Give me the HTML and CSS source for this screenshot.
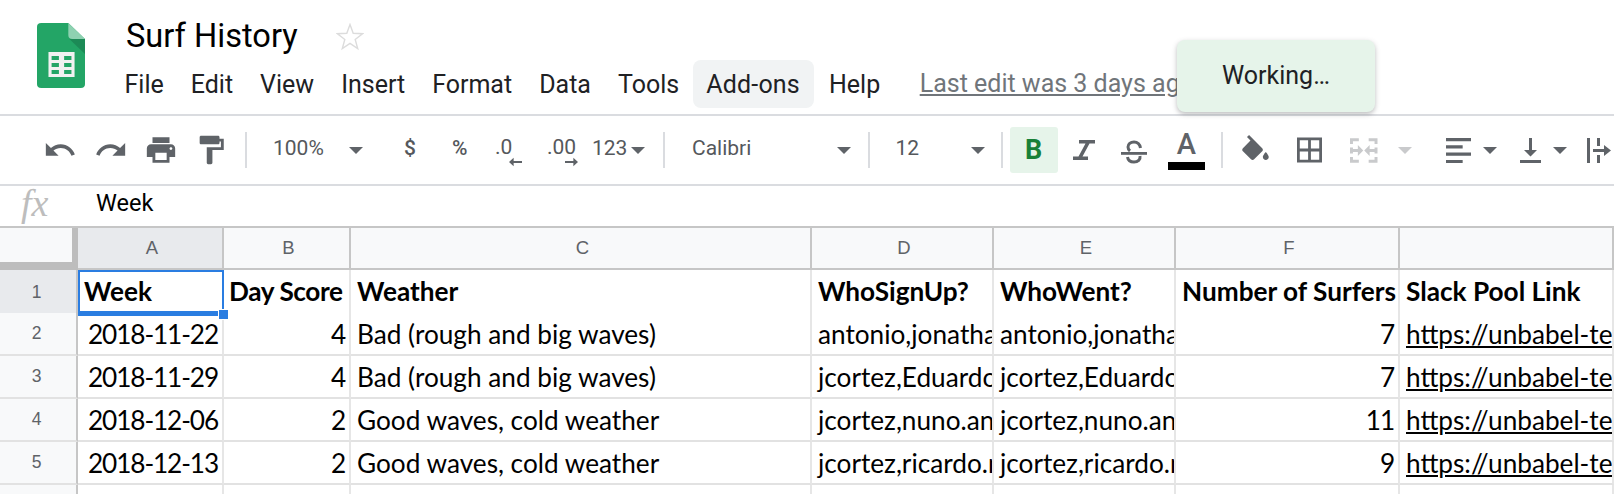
FILE: index.html
```html
<!DOCTYPE html>
<html lang="en">
<head>
<meta charset="utf-8">
<title>Surf History</title>
<link rel="stylesheet" href="styles.css">
</head>
<body>
<div class="app">
  <header class="header">
    <svg class="logo" viewBox="0 0 46 65" width="48" height="65" preserveAspectRatio="none">
      <path d="M4 0H30L46 16V61a4 4 0 0 1-4 4H4a4 4 0 0 1-4-4V4a4 4 0 0 1 4-4z" fill="#23a566"/>
      <path d="M30 0L46 16H34a4 4 0 0 1-4-4z" fill="#8ed1b1"/>
      <path d="M31 16L46 31V16z" fill="#1c8a56"/>
      <path d="M11 29H36V54H11z" fill="#f1f1f1"/>
      <path d="M14 33H21V37H14zM26 33H33V37H26zM14 40H21V44H14zM26 40H33V44H26zM14 47H21V51H14zM26 47H33V51H26z" fill="#23a566"/>
    </svg>
    <div class="heading">
      <div class="title-row">
        <span class="title">Surf History</span>
        <svg class="star" viewBox="0 0 28 28" width="28" height="28"><path d="M14 1.500l3.200 8.800 9.300.4-7.300 5.800 2.500 9-7.700-5.200-7.700 5.200 2.500-9-7.300-5.800 9.300-.4z" fill="none" stroke="#dcdcdc" stroke-width="1.400"/></svg>
      </div>
      <nav class="menu">
        <span class="menu-item">File</span>
        <span class="menu-item">Edit</span>
        <span class="menu-item">View</span>
        <span class="menu-item">Insert</span>
        <span class="menu-item">Format</span>
        <span class="menu-item">Data</span>
        <span class="menu-item">Tools</span>
        <span class="menu-item menu-active">Add-ons</span>
        <span class="menu-item">Help</span>
        <span class="last-edit">Last edit was 3 days ago</span>
      </nav>
    </div>
    <div class="toast">Working…</div>
  </header>

  <div class="toolbar">
    <span class="tb-icon"><svg viewBox="0 0 24 24"><path d="M12.500 8c-2.650 0-5.050.99-6.900 2.600L2 7v9h9l-3.620-3.620c1.390-1.160 3.160-1.880 5.120-1.880 3.540 0 6.550 2.310 7.600 5.500l2.370-.78C21.080 11.030 17.150 8 12.500 8z"/></svg></span>
    <span class="tb-icon"><svg viewBox="0 0 24 24"><path d="M18.400 10.600C16.550 8.990 14.150 8 11.500 8c-4.650 0-8.580 3.030-9.960 7.220L3.900 16c1.050-3.190 4.050-5.500 7.600-5.500 1.950 0 3.730.72 5.120 1.880L13 16h9V7l-3.600 3.600z"/></svg></span>
    <span class="tb-icon"><svg viewBox="0 0 24 24"><path d="M19 8H5c-1.660 0-3 1.340-3 3v6h4v4h12v-4h4v-6c0-1.660-1.340-3-3-3zm-3 11H8v-5h8v5zm3-7c-.55 0-1-.45-1-1s.45-1 1-1 1 .45 1 1-.45 1-1 1zm-1-9H6v4h12V3z"/></svg></span>
    <span class="tb-icon icon-paint"><svg viewBox="0 0 24 24"><path d="M18 4V3c0-.55-.45-1-1-1H5c-.55 0-1 .45-1 1v4c0 .55.45 1 1 1h12c.55 0 1-.45 1-1V6h1v4H9v11c0 .55.45 1 1 1h2c.55 0 1-.45 1-1v-9h8V4h-3z"/></svg></span>
    <span class="sep sep-a"></span>
    <span class="tb-text zoom-val">100%</span>
    <span class="caret caret-zoom"></span>
    <span class="tb-text dollar">$</span>
    <span class="tb-text percent">%</span>
    <span class="dec dec-less">.0<svg class="dec-arrow" viewBox="0 0 14 10"><path d="M0 5L5 .5V4H14V6H5V9.500z"/></svg></span>
    <span class="dec dec-more">.00<svg class="dec-arrow" viewBox="0 0 14 10"><path d="M14 5L9 .5V4H0V6H9V9.500z"/></svg></span>
    <span class="tb-text num-fmt">123</span>
    <span class="caret caret-num"></span>
    <span class="sep sep-b"></span>
    <span class="tb-text font-name">Calibri</span>
    <span class="caret caret-font"></span>
    <span class="sep sep-c"></span>
    <span class="tb-text font-size">12</span>
    <span class="caret caret-size"></span>
    <span class="sep sep-d"></span>
    <span class="bold-btn">B</span>
    <span class="tb-icon icon-italic"><svg viewBox="0 0 22 20"><path d="M6 0H22V3.500H16.500L9.500 16.500H15V20H0V16.500H5.500L12.500 3.500H6z"/></svg></span>
    <span class="tb-icon icon-strike"><svg viewBox="0 0 26 24"><path class="strike-s" d="M19.500 8C19 4.500 16.500 2 13 2 9.500 2 7 4.200 7 7c0 1.600.7 2.900 2 4M19 16c.6 3.500-2 6-6 6-3.500 0-6-1.800-6.500-5"/><path d="M0 12H26V14.800H0z"/></svg></span>
    <span class="text-color"><span class="text-color-a">A</span><span class="text-color-bar"></span></span>
    <span class="sep sep-e"></span>
    <span class="tb-icon icon-fill"><svg viewBox="3 0 18 17"><path d="M7.620 0L6.210 1.410l2.380 2.380-5.150 5.150c-.59.59-.59 1.540 0 2.120l5.500 5.500c.29.29.68.44 1.060.44s.77-.15 1.060-.44l5.500-5.500c.59-.58.59-1.530 0-2.120zM19 11.500s-2 2.170-2 3.500c0 1.100.9 2 2 2s2-.9 2-2c0-1.330-2-3.500-2-3.500z"/></svg></span>
    <span class="tb-icon icon-borders"><svg viewBox="3 3 18 18"><path d="M3 3v18h18V3H3zm8 16H5v-6h6v6zm0-8H5V5h6v6zm8 8h-6v-6h6v6zm0-8h-6V5h6v6z"/></svg></span>
    <span class="tb-icon icon-merge"><svg viewBox="0 0 28 25"><path d="M0 0H9V3H3V6H0zM19 0H28V6H25V3H19zM0 9.500H3V15.500H0zM25 9.500H28V15.500H25zM0 19H3V22H9V25H0zM25 19H28V25H19V22H25zM3 11H8V7L13.500 12.500 8 18V14H3zM25 11H20V7L14.500 12.500 20 18V14H25z"/></svg></span>
    <span class="caret caret-merge"></span>
    <span class="tb-icon icon-align"><svg viewBox="0 0 24 24"><path d="M0 0H24V3H0zM0 7H16V10H0zM0 14H24V17H0zM0 21H16V24H0z"/></svg></span>
    <span class="caret caret-align"></span>
    <span class="tb-icon icon-valign"><svg viewBox="0 0 21 25"><path d="M9 0H12V12H17L10.500 18.500 4 12H9zM0 22H21V25H0z"/></svg></span>
    <span class="caret caret-valign"></span>
    <span class="tb-icon icon-wrap"><svg viewBox="0 0 24 25"><path d="M0 0H3V25H0zM10 0H13V8H10zM10 17H13V25H10zM6 11H17V7L24 12.500 17 18V14H6z"/></svg></span>
  </div>

  <div class="formula">
    <span class="fx">fx</span>
    <span class="formula-value">Week</span>
  </div>

  <div class="sheet">
    <div class="row row-head">
      <div class="col-head corner"></div>
      <div class="col-head col-active">A</div>
      <div class="col-head">B</div>
      <div class="col-head">C</div>
      <div class="col-head">D</div>
      <div class="col-head">E</div>
      <div class="col-head">F</div>
      <div class="col-head"></div>
    </div>
    <div class="row">
      <div class="row-num row-active">1</div>
      <div class="cell bold selected">Week<span class="sel-handle"></span></div>
      <div class="cell bold tight">Day Score</div>
      <div class="cell bold">Weather</div>
      <div class="cell bold">WhoSignUp?</div>
      <div class="cell bold">WhoWent?</div>
      <div class="cell bold">Number of Surfers</div>
      <div class="cell bold">Slack Pool Link</div>
    </div>
    <div class="row">
      <div class="row-num">2</div>
      <div class="cell num">2018-11-22</div>
      <div class="cell num">4</div>
      <div class="cell">Bad (rough and big waves)</div>
      <div class="cell">antonio,jonathan,jcortez</div>
      <div class="cell">antonio,jonathan,jcortez</div>
      <div class="cell num">7</div>
      <div class="cell"><span class="link">https://unbabel-team.slack.com/archives</span></div>
    </div>
    <div class="row">
      <div class="row-num">3</div>
      <div class="cell num">2018-11-29</div>
      <div class="cell num">4</div>
      <div class="cell">Bad (rough and big waves)</div>
      <div class="cell">jcortez,Eduardo,antonio</div>
      <div class="cell">jcortez,Eduardo,antonio</div>
      <div class="cell num">7</div>
      <div class="cell"><span class="link">https://unbabel-team.slack.com/archives</span></div>
    </div>
    <div class="row">
      <div class="row-num">4</div>
      <div class="cell num">2018-12-06</div>
      <div class="cell num">2</div>
      <div class="cell">Good waves, cold weather</div>
      <div class="cell">jcortez,nuno.andrade,antonio</div>
      <div class="cell">jcortez,nuno.andrade,antonio</div>
      <div class="cell num">11</div>
      <div class="cell"><span class="link">https://unbabel-team.slack.com/archives</span></div>
    </div>
    <div class="row">
      <div class="row-num">5</div>
      <div class="cell num">2018-12-13</div>
      <div class="cell num">2</div>
      <div class="cell">Good waves, cold weather</div>
      <div class="cell">jcortez,ricardo.mendes,antonio</div>
      <div class="cell">jcortez,ricardo.mendes,antonio</div>
      <div class="cell num">9</div>
      <div class="cell"><span class="link">https://unbabel-team.slack.com/archives</span></div>
    </div>
    <div class="row">
      <div class="row-num"></div>
      <div class="cell"></div><div class="cell"></div><div class="cell"></div><div class="cell"></div><div class="cell"></div><div class="cell"></div><div class="cell"></div>
    </div>
  </div>
</div>
</body>
</html>
```
FILE: styles.css
```css
* { box-sizing: border-box; }
html, body { margin: 0; padding: 0; height: 100%; overflow: hidden; background: #fff; }
.app { width: 1614px; height: 494px; overflow: hidden; font-family: Roboto, sans-serif; color: #202124; }

/* header */
.header { position: relative; height: 116px; border-bottom: 2px solid #dadce0; display: flex; align-items: flex-start; padding: 23px 0 0 37px; }
.logo { flex: none; }
.heading { margin-left: 41px; display: flex; flex-direction: column; }
.title-row { display: flex; align-items: center; height: 27px; }
.title { font-size: 32.6px; line-height: 29px; color: #000; }
.star { margin-left: 38px; }
.menu { display: flex; align-items: center; margin: 10px 0 0 -15px; height: 48px; font-size: 25px; color: #202124; }
.menu-item { padding: 0 13.5px; line-height: 50px; height: 48px; border-radius: 8px; }
.menu-active { background: #f1f3f4; padding: 0 14.5px 0 13.500px; margin-right: 1px; letter-spacing: .2px; }
.last-edit { margin-left: 26px; color: #70757a; text-decoration: underline; white-space: nowrap; line-height: 50px; }
.toast { position: absolute; left: 1177px; top: 40px; width: 198px; height: 72px; border-radius: 8px; background: #e6f4ea; font-size: 25px; line-height: 71px; padding-left: 45px; color: #202124; box-shadow: 0 2px 5px rgba(60,64,67,.35); }

/* toolbar */
.toolbar { height: 70px; border-bottom: 2px solid #dadce0; display: flex; align-items: center; padding-left: 35px; color: #5f6368; white-space: nowrap; overflow: hidden; }
.tb-icon { flex: none; width: 50.5px; height: 34px; display: flex; align-items: center; justify-content: center; }
.tb-icon svg { width: 34px; height: 34px; fill: #5f6368; display: block; flex: none; }
.icon-paint svg { margin-left: -2px; }
.tb-text { flex: none; font-size: 21px; line-height: 24px; color: #55585c; margin-top: -4px; }
.sep { flex: none; width: 2px; height: 36px; background: #dadce0; }
.caret { flex: none; width: 0; height: 0; border-left: 7px solid transparent; border-right: 7px solid transparent; border-top: 7px solid #5f6368; }

.sep-a { margin-left: 8px; }
.zoom-val { margin-left: 26px; width: 52px; }
.caret-zoom { margin-left: 24px; }
.dollar { margin-left: 41px; width: 13px; font-weight: 500; }
.percent { margin-left: 35px; width: 17px; font-weight: 500; }
.dec { flex: none; position: relative; font-size: 21px; line-height: 24px; margin-top: -6px; color: #55585c; }
.dec-less { margin-left: 26px; width: 20px; }
.dec-more { margin-left: 32px; width: 30px; }
.dec-arrow { position: absolute; width: 13px; height: 10px; fill: #5f6368; top: 22px; }
.dec-less .dec-arrow { left: 14px; }
.dec-more .dec-arrow { left: 18px; }
.num-fmt { margin-left: 15px; width: 35px; }
.caret-num { margin-left: 4px; }
.sep-b { margin-left: 18px; }
.font-name { margin-left: 27px; width: 60px; }
.caret-font { margin-left: 85px; }
.sep-c { margin-left: 17px; }
.font-size { margin-left: 25.5px; width: 24px; }
.caret-size { margin-left: 51px; }
.sep-d { margin-left: 16.5px; }
.bold-btn { flex: none; margin-left: 6.5px; width: 48px; height: 46px; border-radius: 3px; background: #e6f4ea; color: #188038; font-size: 27px; font-weight: 700; line-height: 46px; text-align: center; }
.icon-italic { margin-left: 15px; width: 22px; }
.icon-italic svg { width: 22px; height: 20px; }
.icon-strike { margin-left: 26px; width: 26px; }
.icon-strike svg { width: 26px; height: 24px; margin-top: 3px; }
.strike-s { fill: none; stroke: #5f6368; stroke-width: 3; }
.text-color { flex: none; width: 37.5px; margin-left: 21px; height: 46px; display: flex; flex-direction: column; align-items: center; padding-top: 1px; }
.text-color-a { font-size: 29px; line-height: 32px; color: #5f6368; font-weight: 500; }
.text-color-bar { width: 37.5px; height: 8px; background: #000; margin-top: 2px; }
.sep-e { margin-left: 15.5px; }
.icon-fill { margin-left: 19px; width: 27px; }
.icon-fill svg { width: 27px; height: 25px; margin-top: -6px; }
.icon-borders { margin-left: 28px; width: 25px; }
.icon-borders svg { width: 25px; height: 26px; }
.icon-merge { margin-left: 28.5px; width: 27.5px; }
.icon-merge svg { width: 27.5px; height: 25px; fill: #c9cacc; }
.caret-merge { margin-left: 20px; border-top-color: #c9cacc; }
.icon-align { margin-left: 34px; width: 25px; }
.icon-align svg { width: 25px; height: 25px; }
.caret-align { margin-left: 12px; }
.icon-valign { margin-left: 23px; width: 21px; }
.icon-valign svg { width: 21px; height: 25px; }
.caret-valign { margin-left: 12px; }
.icon-wrap { margin-left: 19px; width: 26px; }
.icon-wrap svg { width: 26px; height: 25px; }

/* formula bar */
.formula { height: 42px; border-bottom: 2px solid #c6c6c6; display: flex; align-items: center; padding-bottom: 7px; }
.fx { margin-left: 21px; width: 75px; font-family: "Liberation Serif", serif; font-style: italic; font-size: 38px; line-height: 38px; color: #bdbdbd; }
.formula-value { font-size: 23.5px; color: #000; }

/* sheet */
.sheet { display: flex; flex-direction: column; }
.row { display: grid; grid-template-columns: 78px 146px 127px 461px 182px 182px 224px 214px; height: 43px; }
.row-head { height: 42px; }
.col-head { display: flex; align-items: center; justify-content: center; padding-left: 4px; background: #f8f9fa; border-right: 2px solid #c6c6c6; border-bottom: 2px solid #c6c6c6; font-family: "Liberation Sans", sans-serif; font-size: 18.5px; color: #5f6368; }
.col-active { background: #e8eaed; }
.corner { background: #f8f9fa; border-right: 6px solid #bdbdbd; border-bottom: 8px solid #bdbdbd; }
.row-num { display: flex; align-items: center; justify-content: center; padding-right: 3px; background: #f8f9fa; border-right: 2px solid #c6c6c6; border-bottom: 2px solid #e2e2e2; font-family: "Liberation Sans", sans-serif; font-size: 17.5px; color: #5f6368; }
.row-active { background: #e8eaed; }
.cell { position: relative; overflow: hidden; white-space: nowrap; background: #fff; border-right: 2px solid #e6e6e6; border-bottom: 2px solid #e2e2e2; padding: 0 4px 0 6px; font-family: Lato, "Liberation Sans", sans-serif; font-size: 26.2px; line-height: 43px; color: #000; }
.num { text-align: right; letter-spacing: -1.1px; }
.bold { font-weight: 700; }
.tight { padding: 0 2px 0 5px; letter-spacing: -0.4px; }
.link { text-decoration: underline; }
.selected { overflow: visible; z-index: 1; box-shadow: inset 0 0 0 2px #2a7de1; border-right: 0; border-bottom: 3px solid #2a7de1; }
.sel-handle { position: absolute; right: -5px; bottom: -7px; width: 11px; height: 11px; background: #2a7de1; border: 1px solid #fff; }
```
